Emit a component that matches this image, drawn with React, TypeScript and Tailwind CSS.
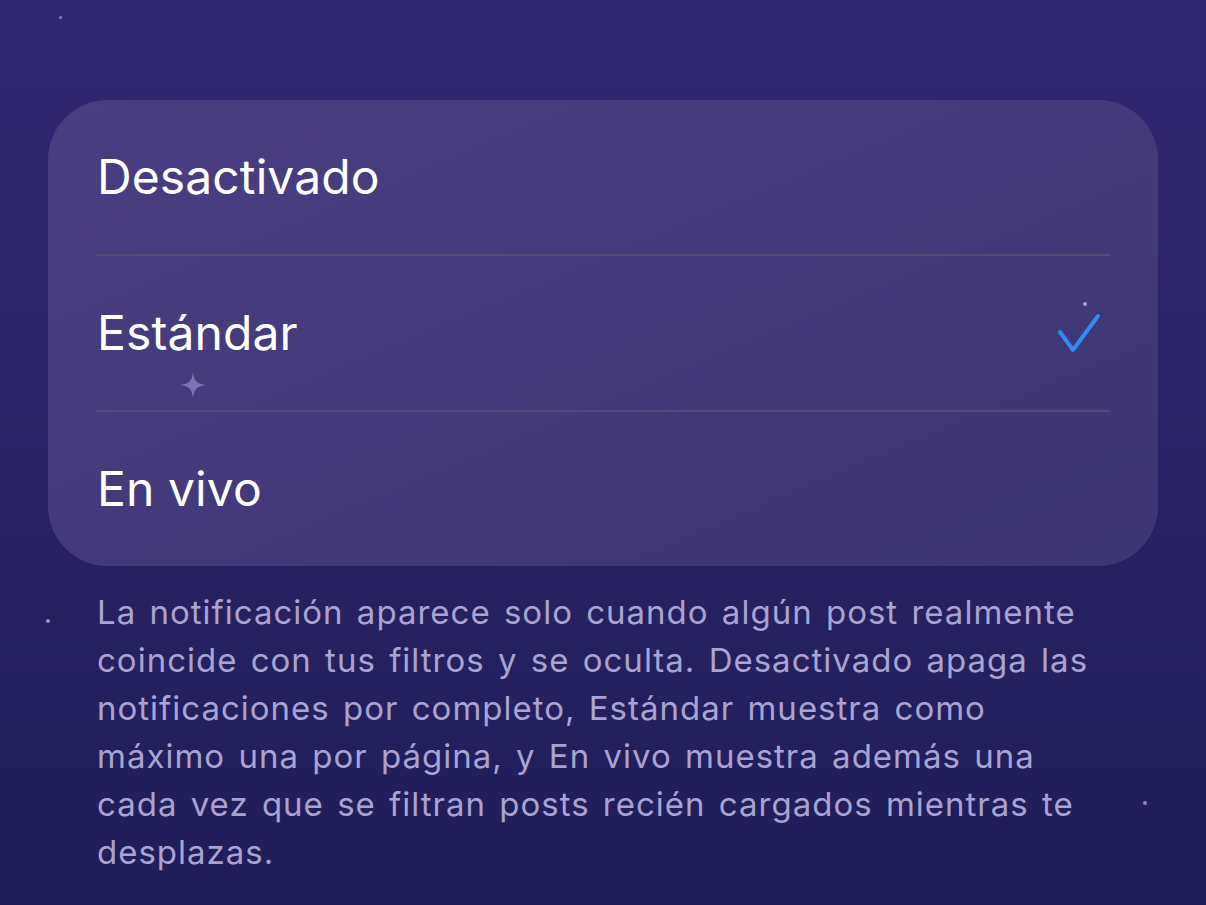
import React from 'react'

const options = [
  { label: 'Desactivado', selected: false },
  { label: 'Estándar', selected: true },
  { label: 'En vivo', selected: false },
]

function Check() {
  return (
    <svg width="46" height="42" viewBox="0 0 46 42" fill="none">
      <path d="M4 20 L17 38 L42 4" stroke="#2f8cf2" strokeWidth="4" strokeLinecap="round" strokeLinejoin="round" />
    </svg>
  )
}

function Sparkle() {
  return (
    <svg width="26" height="26" viewBox="0 0 26 26">
      <path d="M13 0 C14 9 17 12 26 13 C17 14 14 17 13 26 C12 17 9 14 0 13 C9 12 12 9 13 0 Z" fill="#8b82c2" opacity="0.8" />
    </svg>
  )
}

export default function App() {
  return (
    <div
      className="relative h-[905px] w-full overflow-hidden bg-gradient-to-b from-[#332873] to-[#201d59]"
      style={{ fontFamily: 'Inter, "Noto Sans", sans-serif' }}
    >
      {/* stars */}
      <div className="absolute left-[59px] top-[16px] h-[3px] w-[3px] rounded-full bg-[#8c84c8]" />
      <div className="absolute left-[1083px] top-[302px] h-[4px] w-[4px] rounded-full bg-[#a49dd0]" />
      <div className="absolute left-[46px] top-[619px] h-[4px] w-[4px] rounded-full bg-[#9891c8]" />
      <div className="absolute left-[1143px] top-[801px] h-[4px] w-[4px] rounded-full bg-[#8d87c0]" />
      <div className="absolute left-[180px] top-[372px]">
        <Sparkle />
      </div>

      <div className="px-12 pt-[100px]">
        <div className="rounded-[60px] bg-gradient-to-br from-[#4a3e82] to-[#3e3573] px-12">
          {options.map((o, i) => (
            <div key={o.label}>
              {i > 0 && <div className="h-[2px] bg-[#514b78]" />}
              <div className="flex h-[154px] items-center justify-between pl-px pr-2">
                <span className="text-[48px] tracking-[0.1px] text-white">{o.label}</span>
                {o.selected && <Check />}
              </div>
            </div>
          ))}
        </div>

        <p className="mt-[22px] pl-[49px] pr-[56px] text-[33px] leading-[48px] tracking-[1px] [word-spacing:3px] text-[#a9a3d2]">
          La notificación aparece solo cuando algún post realmente coincide con tus filtros y se oculta. Desactivado
          apaga las notificaciones por completo, Estándar muestra como máximo una por página, y En vivo muestra además
          una cada vez que se filtran posts recién cargados mientras te desplazas.
        </p>
      </div>
    </div>
  )
}
